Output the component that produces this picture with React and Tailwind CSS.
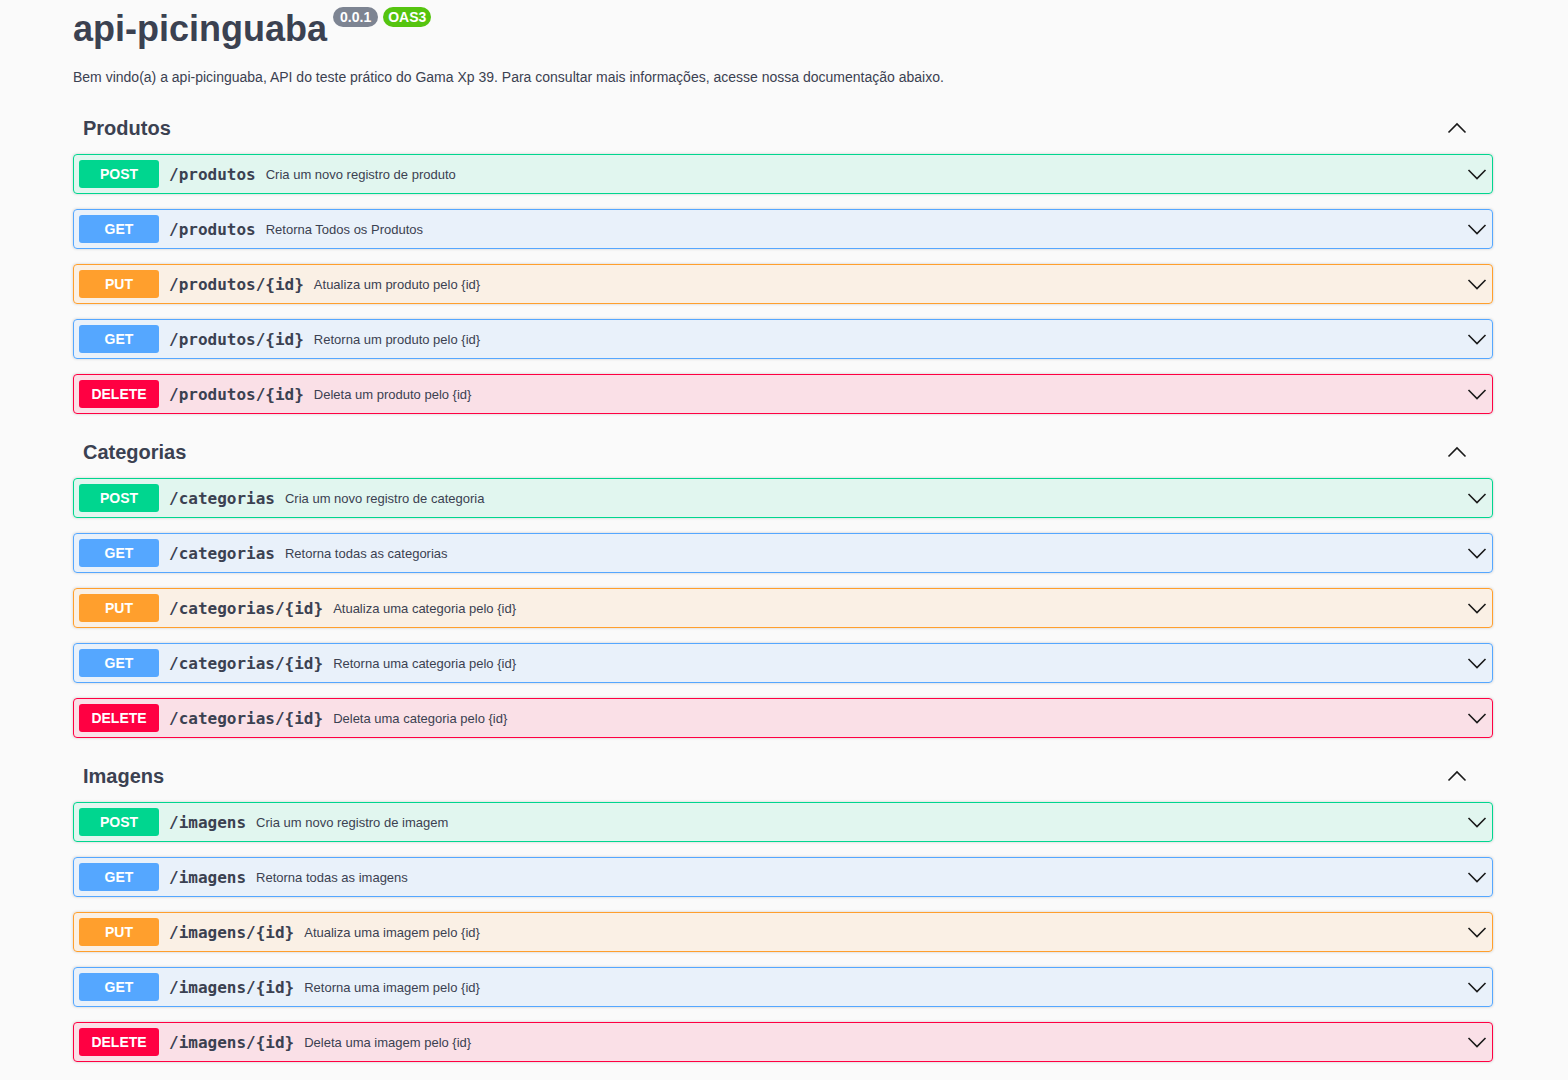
import { Fragment } from "react";

const methods = {
  POST: { badge: "bg-[#00d68f]", row: "border-[#00d68f] bg-[#00d68f]/10" },
  GET: { badge: "bg-[#55a7ff]", row: "border-[#55a7ff] bg-[#55a7ff]/10" },
  PUT: { badge: "bg-[#ff9f2d]", row: "border-[#ff9f2d] bg-[#ff9f2d]/10" },
  DELETE: { badge: "bg-[#ff0042]", row: "border-[#ff0042] bg-[#ff0042]/10" },
};

const sections = [
  {
    name: "Produtos",
    ops: [
      ["POST", "/produtos", "Cria um novo registro de produto"],
      ["GET", "/produtos", "Retorna Todos os Produtos"],
      ["PUT", "/produtos/{id}", "Atualiza um produto pelo {id}"],
      ["GET", "/produtos/{id}", "Retorna um produto pelo {id}"],
      ["DELETE", "/produtos/{id}", "Deleta um produto pelo {id}"],
    ],
  },
  {
    name: "Categorias",
    ops: [
      ["POST", "/categorias", "Cria um novo registro de categoria"],
      ["GET", "/categorias", "Retorna todas as categorias"],
      ["PUT", "/categorias/{id}", "Atualiza uma categoria pelo {id}"],
      ["GET", "/categorias/{id}", "Retorna uma categoria pelo {id}"],
      ["DELETE", "/categorias/{id}", "Deleta uma categoria pelo {id}"],
    ],
  },
  {
    name: "Imagens",
    ops: [
      ["POST", "/imagens", "Cria um novo registro de imagem"],
      ["GET", "/imagens", "Retorna todas as imagens"],
      ["PUT", "/imagens/{id}", "Atualiza uma imagem pelo {id}"],
      ["GET", "/imagens/{id}", "Retorna uma imagem pelo {id}"],
      ["DELETE", "/imagens/{id}", "Deleta uma imagem pelo {id}"],
    ],
  },
];

function Chevron({ up }) {
  return (
    <svg width="20" height="20" viewBox="0 0 20 20" className="text-[#1a1a1a]">
      <path
        d={up ? "M1.5 14.5 L10 6 L18.5 14.5" : "M1.5 6 L10 14.5 L18.5 6"}
        fill="none"
        stroke="currentColor"
        strokeWidth="1.6"
      />
    </svg>
  );
}

function Operation({ method, path, desc }) {
  const m = methods[method];
  return (
    <div className={`flex items-center h-10 mb-[15px] border rounded-[4px] p-[5px] shadow-[0_0_3px_rgba(0,0,0,0.19)] ${m.row}`}>
      <span className={`w-20 h-7 flex items-center justify-center rounded-[3px] text-white text-sm font-bold ${m.badge}`}>
        {method}
      </span>
      <span className="px-[10px] pt-[2px] text-base font-bold text-[#3b4151] font-['DejaVu_Sans_Mono',monospace]">
        {path}
      </span>
      <span className="text-[13px] pt-[1px] text-[#3b4151] flex-1">{desc}</span>
      <Chevron />
    </div>
  );
}

export default function App() {
  return (
    <div className="min-h-screen bg-[#fafafa] font-['Liberation_Sans',Arial,sans-serif] text-[#3b4151]">
      <div className="max-w-[1460px] mx-auto pl-[19px] pr-[21px]">
        <div className="flex items-start pt-[4px]">
          <h2 className="text-[36px] leading-[50px] font-bold text-[#3b4151]">api-picinguaba</h2>
          <span className="ml-[6px] mt-[3px] h-5 px-[7px] flex items-center rounded-full bg-[#7d8492] text-white text-sm font-bold">
            0.0.1
          </span>
          <span className="ml-[5px] mt-[3px] h-5 px-[5px] flex items-center rounded-full bg-[#55c40f] text-white text-sm font-bold">
            OAS3
          </span>
        </div>
        <p className="text-sm mt-[14px] leading-[18px]">
          Bem vindo(a) a api-picinguaba, API do teste prático do Gama Xp 39. Para consultar mais informações, acesse nossa documentação abaixo.
        </p>
        <div className="mt-[19px]">
          {sections.map((s) => (
            <Fragment key={s.name}>
              <div className="flex items-center justify-between h-[46px] pl-[10px] pr-[26px] mb-[3px]">
                <h3 className="text-[20px] font-bold text-[#3b4151]">{s.name}</h3>
                <Chevron up />
              </div>
              {s.ops.map(([method, path, desc]) => (
                <Operation key={method + path} method={method} path={path} desc={desc} />
              ))}
            </Fragment>
          ))}
        </div>
      </div>
    </div>
  );
}
